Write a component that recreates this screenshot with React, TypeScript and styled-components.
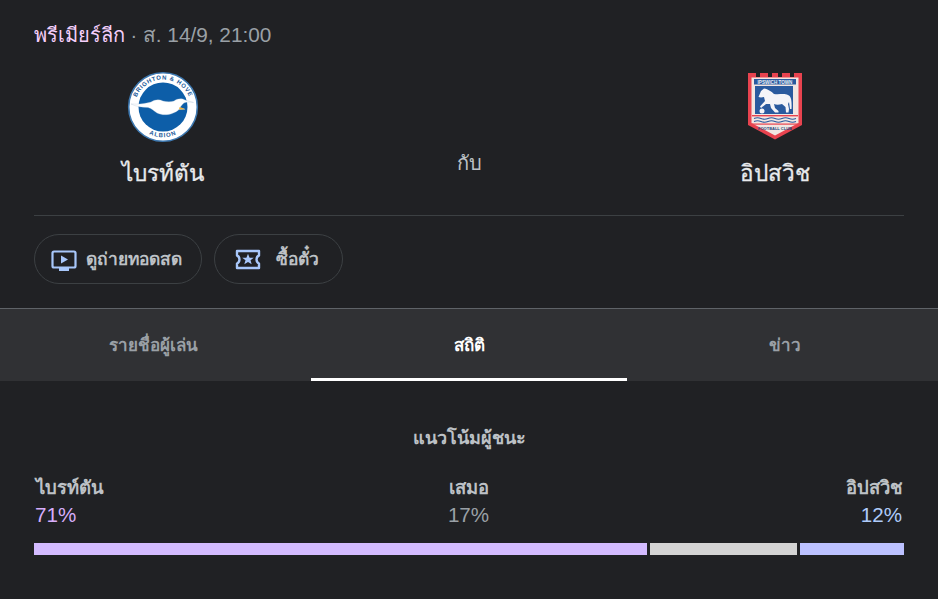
import React from "react";
import styled, { createGlobalStyle } from "styled-components";

const Global = createGlobalStyle`
  html, body { margin: 0; padding: 0; background: #202124; }
  body { font-family: "Liberation Sans", Arial, "Noto Sans", sans-serif; overflow: hidden; }
`;
const Page = styled.div`
  width: 938px; height: 599px; background: #202124; overflow: hidden; display: flex; flex-direction: column;
`;
const Header = styled.header`
  padding: 24px 34px 0; height: 284px; box-sizing: border-box; display: flex; flex-direction: column;
`;
const MetaLine = styled.div`
  font-size: 20px; line-height: 22px; color: #9aa0a6; white-space: nowrap;
`;
const League = styled.span` color: #f5cffb; `;
const Time = styled.span` font-size: 20.8px; `;
const Matchup = styled.div`
  display: grid; grid-template-columns: 258px 354px 258px; margin-top: 25px; height: 144px; border-bottom: 1px solid #3c4043;
`;
const Team = styled.div`
  display: flex; flex-direction: column; align-items: center;
`;
const CrestBox = styled.div` width: 72px; height: 72px; `;
const TeamName = styled.div`
  margin-top: 15px; font-size: 22.5px; line-height: 32px; font-weight: 400; color: #e8eaed; -webkit-text-stroke: 0.3px #e8eaed;
`;
const Versus = styled.div`
  text-align: center; font-size: 20px; line-height: 24px; color: #bdc1c6; margin-top: 80px;
`;
const Actions = styled.div` display: flex; gap: 12px; margin-top: 18px; `;
const Pill = styled.div<{ $pad: string; $gap: number }>`
  height: 50px; box-sizing: border-box; border: 1px solid #3c4043; border-radius: 25px; display: flex; align-items: center; gap: ${(p) => p.$gap}px; color: #bdc1c6; font-size: 17.4px; font-weight: 700; white-space: nowrap;
  padding: ${(p) => p.$pad};
`;
const PillIcon = styled.svg` width: 26px; height: 26px; flex: none; margin-top: 3px; `;
const Tabs = styled.nav`
  margin-top: 24px; height: 73px; box-sizing: border-box; background: #303134; border-top: 1px solid #5f6368; display: flex; justify-content: center; overflow: hidden;
`;
const Tab = styled.div<{ $active?: boolean }>`
  flex: 0 0 316px; height: 72px; box-sizing: border-box; padding-top: 2px; display: flex; align-items: center; justify-content: center; font-size: 17px; font-weight: 700;
  color: ${(p) => (p.$active ? "#ffffff" : "#9aa0a6")};
  border-bottom: 3px solid ${(p) => (p.$active ? "#ffffff" : "transparent")};
`;
const Stats = styled.section` padding: 43px 34px 0; `;
const StatsTitle = styled.h2`
  margin: 0; text-align: center; font-size: 18px; line-height: 28px; font-weight: 700; color: #bdc1c6;
`;
const Outcomes = styled.div`
  margin-top: 24px; display: grid; grid-template-columns: 1fr 1fr 1fr;
`;
const Outcome = styled.div<{ $align: string }>` text-align: ${(p) => p.$align}; `;
const OutcomeName = styled.div` font-size: 18.4px; line-height: 24px; font-weight: 700; color: #bdc1c6; padding: 0 2px; `;
const OutcomeValue = styled.div<{ $color: string }>` font-size: 20.6px; line-height: 28px; margin-top: 1px; padding: 0 2px 0 1px; color: ${(p) => p.$color}; `;
const Bar = styled.div` display: flex; gap: 3px; margin-top: 14px; height: 12px; `;
const Segment = styled.div<{ $color: string; $w: number }>` flex: 0 0 ${(p) => p.$w}px; background: ${(p) => p.$color}; `;

const BrightonCrest = () => (
  <svg viewBox="0 0 72 72" width="72" height="72">
    <defs>
      <path id="arcTop" d="M7.5 37a28.5 28.5 0 0 1 57 0" />
      <path id="arcBot" d="M9 50a30.5 30.5 0 0 0 54 0" />
    </defs>
    <circle cx="36" cy="36" r="34.3" fill="#fff" stroke="#3d78b0" strokeWidth="1.6" />
    <circle cx="36" cy="36" r="24.5" fill="#0d5ea8" />
    <text fontFamily="Liberation Sans" fontWeight="700" fontSize="6" fill="#1b5a99" letterSpacing=".7">
      <textPath href="#arcTop" startOffset="50%" textAnchor="middle">BRIGHTON &amp; HOVE</textPath>
    </text>
    <text fontFamily="Liberation Sans" fontWeight="700" fontSize="6" fill="#1b5a99" letterSpacing="1">
      <textPath href="#arcBot" startOffset="50%" textAnchor="middle">ALBION</textPath>
    </text>
    <path d="M4 33C12 33.5 19 32.5 24 31C28 28.5 32 28 36 30C40 31 44 31 47 30C50 27.5 55 27 58 29L66.5 31.5C60 30.5 56.5 31.5 55 34L53 36.5L58 38.2L52 38.5C47 43.5 37 45.5 30 42C27 40 25 37.5 21 36.5C15 36.5 9 35.5 4 33Z" fill="#fff" stroke="#a9bdd3" strokeWidth=".3" />
    <path d="M52 36.6L54 36.4L58.5 38.2L52.4 38.6Z" fill="#f2b233" />
  </svg>
);

const IpswichCrest = () => (
  <svg viewBox="0 0 72 72" width="72" height="72">
    <path d="M9 2H17V6H21V2H29V6H33V2H39V6H43V2H51V6H55V2H63V54L36 68.5L9 54Z" fill="#e8434f" />
    <path d="M12.5 6.5H59.5V52L36 64.5L12.5 52Z" fill="#f2e6e2" />
    <rect x="15" y="8" width="42" height="5.5" fill="#2a5a9e" />
    <text x="36" y="12.6" textAnchor="middle" fontFamily="Liberation Sans" fontWeight="700" fontSize="4.6" fill="#e8eef6">IPSWICH TOWN</text>
    <rect x="16" y="15" width="38" height="28" fill="#2a5a9e" />
    <path d="M19.5 26L22 20L25 17.5C29 18 33 21 35 23C40 24 45 22 49 24C52 25 53 29 52.5 38L51 38L50 31L49 33L50 38L49.5 41.5H47L46.5 36L43 33C40 34 37 34 35 33L36 37L39.5 40V41.5H36L32 37L31 33L27 33L22 37L21 35.5L26 30L25 26L22 26.5Z" fill="#f4f4f8" />
    <circle cx="23" cy="40" r="2.5" fill="#f4f4f8" />
    <rect x="13" y="44" width="46" height="1.4" fill="#e8434f" />
    <path d="M15 47.5q3.5-1.5 7 0t7 0 7 0 7 0 7 0 7 0M15 50.5q3.5-1.5 7 0t7 0 7 0 7 0 7 0 7 0" stroke="#2a5a9e" strokeWidth="1.1" fill="none" />
    <rect x="13" y="52.5" width="46" height="1.2" fill="#e8434f" />
    <text x="36" y="58.6" textAnchor="middle" fontFamily="Liberation Sans" fontWeight="700" fontSize="4" fill="#264a80">FOOTBALL CLUB</text>
  </svg>
);

export default function App() {
  return (
    <Page>
      <Global />
      <Header>
        <MetaLine><League>พรีเมียร์ลีก</League> · <Time>ส. 14/9, 21:00</Time></MetaLine>
        <Matchup>
          <Team>
            <CrestBox><BrightonCrest /></CrestBox>
            <TeamName>ไบรท์ตัน</TeamName>
          </Team>
          <Versus>กับ</Versus>
          <Team>
            <CrestBox><IpswichCrest /></CrestBox>
            <TeamName>อิปสวิช</TeamName>
          </Team>
        </Matchup>
        <Actions>
          <Pill $pad="0 19px 0 16px" $gap={9}>
            <PillIcon viewBox="0 0 26 26">
              <rect x="1.5" y="3.5" width="23" height="16" rx="1.5" fill="none" stroke="#a8c7fa" strokeWidth="2.2" />
              <path d="M10 7.5L17 11.5L10 15.5Z" fill="#a8c7fa" />
              <rect x="8" y="20" width="10" height="3" fill="#a8c7fa" />
            </PillIcon>
            ดูถ่ายทอดสด
          </Pill>
          <Pill $pad="0 23px 0 20px" $gap={15}>
            <PillIcon viewBox="0 0 26 26">
              <path d="M2 3H24V7.5C21 8.5 20.5 14 24 15.5V20H2V15.5C5.5 14 5 8.5 2 7.5Z" fill="none" stroke="#a8c7fa" strokeWidth="2.4" strokeLinejoin="round" />
              <path d="M13 5.8L14.6 9.8H18.8L15.5 12.3L16.7 16.3L13 14L9.3 16.3L10.5 12.3L7.2 9.8H11.4Z" fill="#a8c7fa" />
            </PillIcon>
            ซื้อตั๋ว
          </Pill>
        </Actions>
      </Header>
      <Tabs>
        <Tab>รายชื่อผู้เล่น</Tab>
        <Tab $active>สถิติ</Tab>
        <Tab>ข่าว</Tab>
      </Tabs>
      <Stats>
        <StatsTitle>แนวโน้มผู้ชนะ</StatsTitle>
        <Outcomes>
          <Outcome $align="left">
            <OutcomeName>ไบรท์ตัน</OutcomeName>
            <OutcomeValue $color="#d7aefb">71%</OutcomeValue>
          </Outcome>
          <Outcome $align="center">
            <OutcomeName>เสมอ</OutcomeName>
            <OutcomeValue $color="#9aa0a6">17%</OutcomeValue>
          </Outcome>
          <Outcome $align="right">
            <OutcomeName>อิปสวิช</OutcomeName>
            <OutcomeValue $color="#aecbfa">12%</OutcomeValue>
          </Outcome>
        </Outcomes>
        <Bar>
          <Segment $color="#d3bbff" $w={613} />
          <Segment $color="#d4d4d4" $w={147} />
          <Segment $color="#bcc1ff" $w={104} />
        </Bar>
      </Stats>
    </Page>
  );
}
